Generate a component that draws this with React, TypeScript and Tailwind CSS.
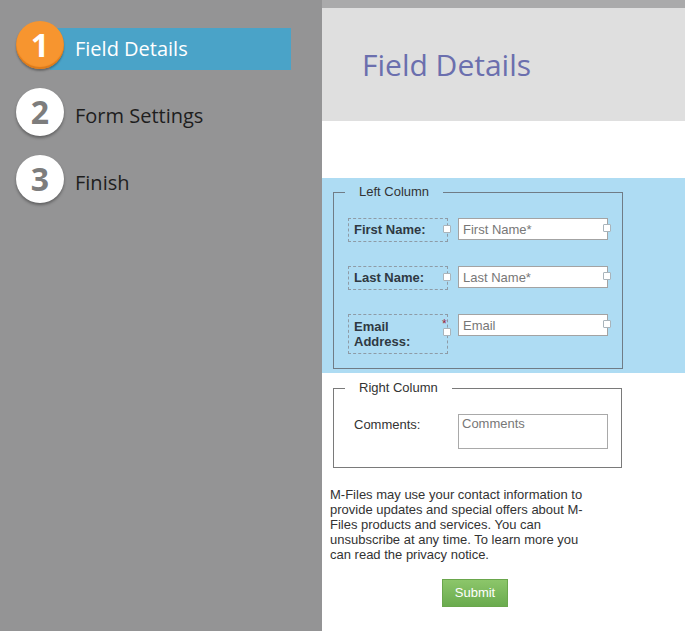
import type { ReactNode } from "react";

type Step = { number: number; label: string; active?: boolean };

const steps: Step[] = [
  { number: 1, label: "Field Details", active: true },
  { number: 2, label: "Form Settings" },
  { number: 3, label: "Finish" },
];

const openSans = "font-['Open_Sans','Noto_Sans',sans-serif]";
const arial = "font-['Liberation_Sans',Arial,sans-serif]";

function StepRow({ step }: { step: Step }) {
  return (
    <div className="flex items-start h-[48px]">
      <div
        className={`relative z-10 ml-[16px] flex h-[48px] w-[48px] shrink-0 items-center justify-center rounded-full font-bold text-[32px] leading-none ${
          step.active
            ? "bg-[#f7952f] text-white shadow-[0_2px_2px_rgba(0,0,0,0.3),inset_0_-2px_1px_#dc7a1a]"
            : "bg-white text-[#7d7d7d] shadow-[0_2px_3px_rgba(0,0,0,0.35)]"
        }`}
      >
        {step.number}
      </div>
      <div
        className={`-ml-[14px] mt-[7px] h-[42px] w-[241px] pl-[25px] text-[20px] leading-[42px] ${
          step.active ? "bg-[#4aa3c8] text-white" : "text-[#1e1e1e]"
        }`}
      >
        {step.label}
      </div>
    </div>
  );
}

function Handle({ className }: { className: string }) {
  return <span className={`absolute h-[8px] w-[8px] rounded-[1px] border border-[#a9b4bb] bg-white ${className}`} />;
}

function FieldRow({ label, placeholder, tall, required }: { label: ReactNode; placeholder: string; tall?: boolean; required?: boolean }) {
  return (
    <div className="relative flex items-start">
      <div
        className={`w-[100px] border border-dashed border-[#8e9ba6] pl-[5px] font-bold text-[13px] text-[#2f3942] ${
          tall ? "h-[40px] pt-[4px] leading-[15px]" : "h-[24px] leading-[22px]"
        }`}
      >
        {label}
      </div>
      <input
        placeholder={placeholder}
        className="ml-[10px] h-[22px] w-[150px] border border-[#a3a3a3] bg-white px-[4px] text-[13px] text-[#333] outline-none placeholder:text-[#777]"
      />
      {required && <span className="absolute left-[94px] top-[4px] text-[12px] leading-none text-[#9b2335]">*</span>}
      <Handle className={tall ? "left-[95px] top-[14px]" : "left-[95px] top-[7px]"} />
      <Handle className="left-[255px] top-[6px]" />
    </div>
  );
}

export default function App() {
  return (
    <div className="flex h-[631px] w-[685px] overflow-hidden">
      <aside className={`w-[322px] shrink-0 bg-[#949495] pt-[21px] ${openSans}`}>
        <div className="flex flex-col gap-[19px]">
          {steps.map((step) => <StepRow key={step.number} step={step} />)}
        </div>
      </aside>

      <main className="flex w-[363px] flex-col bg-white">
        <div className="h-[8px] bg-[#aaaaab]" />
        <header className="flex h-[113px] items-center bg-[#dfdfdf] pl-[40px]">
          <h1 className={`text-[30px] leading-none text-[#6b6fae] ${openSans}`}>Field Details</h1>
        </header>
        <div className="h-[57px]" />

        <div className={`${arial} text-[#333]`}>
          <section className="bg-[#aedcf3] pt-[6px] pb-[4px]">
            <fieldset className="ml-[11px] w-[289px] border border-[#707c86] px-[14px] pt-[18px] pb-[14px]">
              <legend className="ml-[-3px] px-[14px] text-[13px] leading-[16px]">Left Column</legend>
              <div className="flex flex-col gap-[24px]">
                <FieldRow label="First Name:" placeholder="First Name*" />
                <FieldRow label="Last Name:" placeholder="Last Name*" />
                <FieldRow label={<>Email<br />Address:</>} placeholder="Email" tall required />
              </div>
            </fieldset>
          </section>

          <fieldset className="ml-[11px] mt-[7px] w-[289px] border border-[#7a7a7a] pl-[20px] pt-[18px] pb-[18px]">
            <legend className="ml-[-9px] px-[14px] text-[13px] leading-[16px]">Right Column</legend>
            <div className="flex items-start">
              <span className="w-[104px] pt-[3px] text-[13px] leading-[16px]">Comments:</span>
              <textarea
                placeholder="Comments"
                className="h-[35px] w-[150px] resize-none border border-[#a9a9a9] bg-white px-[3px] pt-[1px] text-[13px] leading-[16px] outline-none placeholder:text-[#777]"
              />
            </div>
          </fieldset>

          <p className="ml-[8px] mt-[19px] w-[262px] text-[13px] leading-[15px]">
            M-Files may use your contact information to provide updates and special offers about M-Files products and services. You can unsubscribe at any time. To learn more you can read the privacy notice.
          </p>

          <button className="ml-[120px] mt-[17px] h-[28px] w-[66px] border border-[#6aa64c] bg-gradient-to-b from-[#8cc66a] to-[#6aab4e] text-[13px] text-white">
            Submit
          </button>
        </div>
      </main>
    </div>
  );
}
